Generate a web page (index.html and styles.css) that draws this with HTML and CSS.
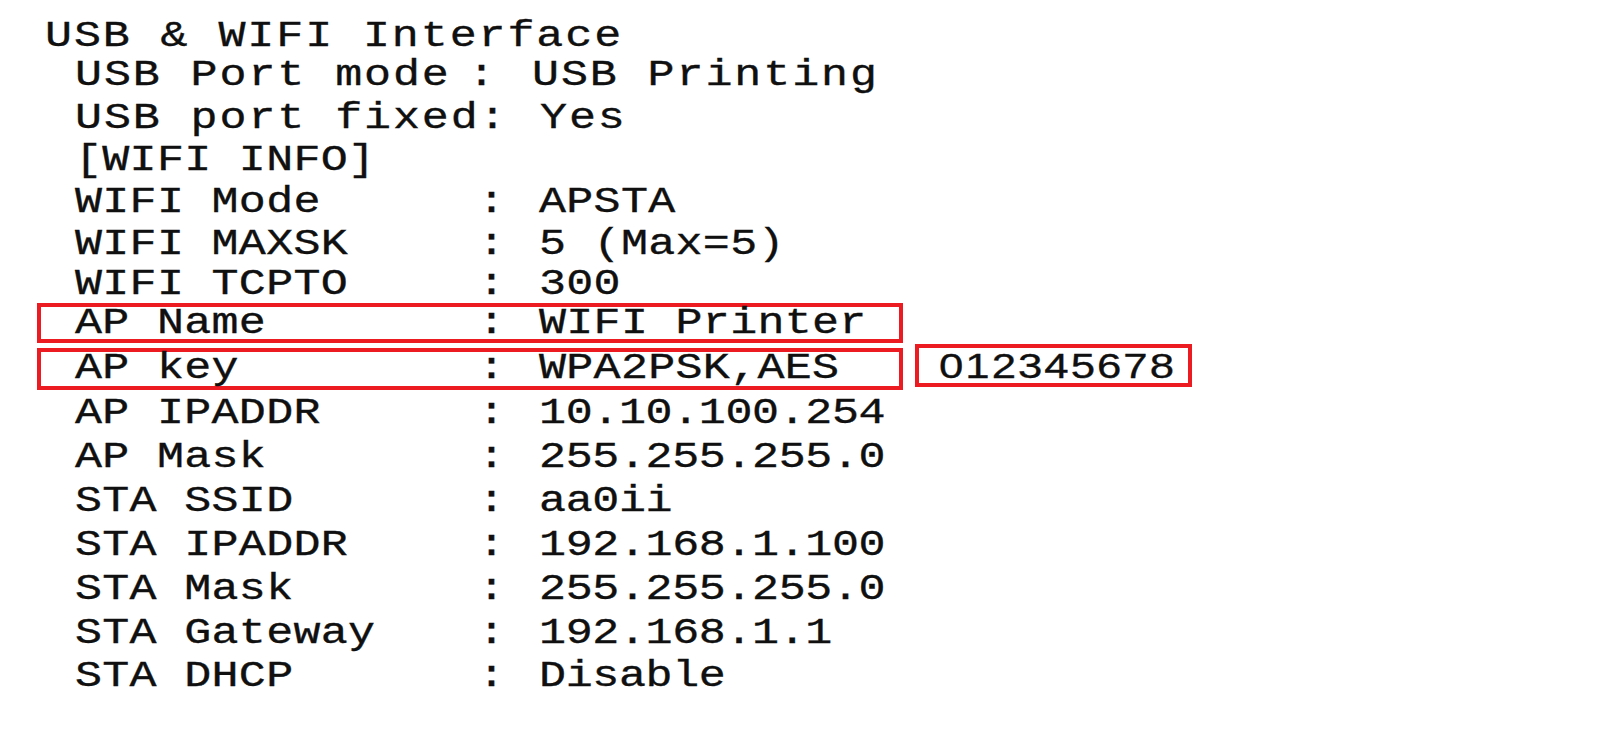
FILE: index.html
```html
<!DOCTYPE html>
<html>
<head>
<meta charset="utf-8">
<title>USB &amp; WIFI Interface</title>
<link rel="stylesheet" href="styles.css">
</head>
<body>
<div class="sheet">
  <div class="title"><span class="t">USB &amp; WIFI Interface</span></div>
  <div class="row wide r2"><span class="k">USB Port mode</span><span class="c">:</span><span class="v">USB Printing</span></div>
  <div class="row wide r3"><span class="k">USB port fixed</span><span class="c">:</span><span class="v">Yes</span></div>
  <div class="row"><span class="k">[WIFI INFO]</span></div>
  <div class="row"><span class="k">WIFI Mode</span><span class="c">:</span><span class="v">APSTA</span></div>
  <div class="row"><span class="k">WIFI MAXSK</span><span class="c">:</span><span class="v">5 (Max=5)</span></div>
  <div class="row short"><span class="k">WIFI TCPTO</span><span class="c">:</span><span class="v">300</span></div>
  <div class="row boxed b1"><span class="k">AP Name</span><span class="c">:</span><span class="v">WIFI Printer</span></div>
  <div class="keyline">
    <div class="row boxed b2"><span class="k">AP key</span><span class="c">:</span><span class="v">WPA2PSK,AES</span></div>
    <div class="keybox"><span class="d">012345678</span></div>
  </div>
  <div class="lower">
    <div class="row"><span class="k">AP IPADDR</span><span class="c">:</span><span class="v">10.10.100.254</span></div>
    <div class="row"><span class="k">AP Mask</span><span class="c">:</span><span class="v">255.255.255.0</span></div>
    <div class="row"><span class="k">STA SSID</span><span class="c">:</span><span class="v">aa0ii</span></div>
    <div class="row"><span class="k">STA IPADDR</span><span class="c">:</span><span class="v">192.168.1.100</span></div>
    <div class="row"><span class="k">STA Mask</span><span class="c">:</span><span class="v">255.255.255.0</span></div>
    <div class="row"><span class="k">STA Gateway</span><span class="c">:</span><span class="v">192.168.1.1</span></div>
    <div class="row"><span class="k">STA DHCP</span><span class="c">:</span><span class="v">Disable</span></div>
  </div>
</div>
</body>
</html>
```
FILE: styles.css
```css
html, body {
  margin: 0;
  padding: 0;
  background: #ffffff;
}

.sheet {
  width: 1603px;
  height: 754px;
  box-sizing: border-box;
  padding: 18.3px 0 0 37px;
  font-family: "Liberation Mono", "DejaVu Sans Mono", monospace;
  font-size: 36px;
  color: #101010;
  -webkit-text-stroke: 0.35px #101010;
}

.title {
  height: 37px;
  line-height: 37px;
  padding-left: 7.7px;
  white-space: pre;
}

.t, .k, .c, .v {
  display: inline-block;
  transform: scaleX(1.25);
  transform-origin: 0 50%;
  white-space: pre;
  flex-shrink: 0;
}

.t {
  letter-spacing: 1.52px;
}

.row {
  display: flex;
  align-items: center;
  height: 42.3px;
  line-height: 42.3px;
  padding-left: 37.7px;
  letter-spacing: 0.24px;
}

.k {
  width: 403.8px;
}

.c {
  width: 60.5px;
}

.wide .k, .wide .v {
  letter-spacing: 1.52px;
}

.r2 .k {
  width: 393.8px;
}

.r2 .c {
  width: 63.9px;
}

.r3 .k {
  width: 404.6px;
}

.r3 .c {
  width: 60.7px;
}

.short {
  height: 36px;
  line-height: 36px;
}

.boxed {
  box-sizing: border-box;
  width: 866px;
  border: 4px solid #ec1b22;
  padding-left: 33.7px;
}

.b1 {
  height: 40px;
  line-height: 31px;
  padding-top: 1px;
}

.keyline {
  display: flex;
  align-items: flex-start;
  gap: 11.7px;
  margin-top: 1.2px;
}

.b2 {
  height: 42px;
  line-height: 34px;
  margin-top: 3.8px;
}

.keybox {
  box-sizing: border-box;
  width: 277px;
  height: 43px;
  border: 4px solid #ec1b22;
  padding-left: 20.8px;
  font-family: "Liberation Sans", Arial, sans-serif;
  font-size: 35px;
  line-height: 35px;
}

.d {
  display: inline-block;
  transform: scaleX(1.25);
  transform-origin: 0 50%;
  letter-spacing: 1.6px;
}

.lower {
  margin-top: 2.3px;
}

.lower .row {
  height: 43.9px;
  line-height: 43.9px;
}

.lower .v {
  letter-spacing: -0.3px;
}
```
